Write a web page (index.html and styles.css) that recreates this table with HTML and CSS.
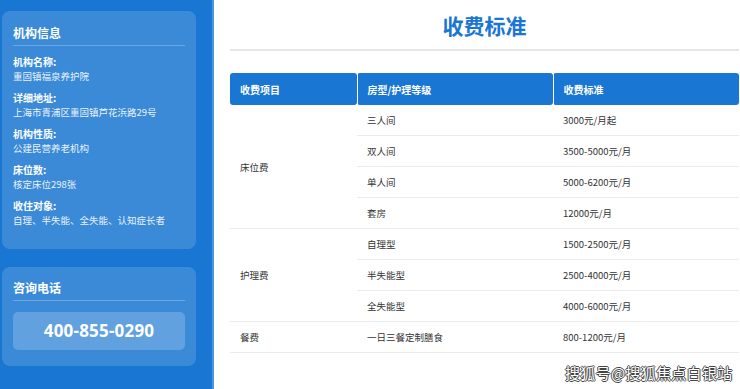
FILE: index.html
```html
<!DOCTYPE html>
<html lang="zh-CN">
<head>
    <meta charset="UTF-8">
    <meta name="viewport" content="width=device-width, initial-scale=1.0">
    <title>收费标准</title>
    <link rel="stylesheet" href="styles.css">
</head>
<body>
    <div class="page">
        <aside class="sidebar">
            <div class="card">
                <h3 class="card-title">机构信息</h3>
                <div class="info-item">
                    <p class="info-label">机构名称:</p>
                    <p class="info-value">重固镇福泉养护院</p>
                </div>
                <div class="info-item">
                    <p class="info-label">详细地址:</p>
                    <p class="info-value">上海市青浦区重固镇芦花浜路29号</p>
                </div>
                <div class="info-item">
                    <p class="info-label">机构性质:</p>
                    <p class="info-value">公建民营养老机构</p>
                </div>
                <div class="info-item">
                    <p class="info-label">床位数:</p>
                    <p class="info-value">核定床位298张</p>
                </div>
                <div class="info-item">
                    <p class="info-label">收住对象:</p>
                    <p class="info-value">自理、半失能、全失能、认知症长者</p>
                </div>
            </div>
            <div class="card card-phone">
                <h3 class="card-title">咨询电话</h3>
                <div class="phone-box">400-855-0290</div>
            </div>
        </aside>

        <main class="content">
            <h1 class="page-title">收费标准</h1>
            <table class="fee-table">
                <colgroup>
                    <col class="col-item">
                    <col class="col-type">
                    <col class="col-price">
                </colgroup>
                <thead>
                    <tr>
                        <th>收费项目</th>
                        <th>房型/护理等级</th>
                        <th>收费标准</th>
                    </tr>
                </thead>
                <tbody>
                    <tr>
                        <td rowspan="4">床位费</td>
                        <td>三人间</td>
                        <td>3000元/月起</td>
                    </tr>
                    <tr>
                        <td>双人间</td>
                        <td>3500-5000元/月</td>
                    </tr>
                    <tr>
                        <td>单人间</td>
                        <td>5000-6200元/月</td>
                    </tr>
                    <tr>
                        <td>套房</td>
                        <td>12000元/月</td>
                    </tr>
                    <tr>
                        <td rowspan="3">护理费</td>
                        <td>自理型</td>
                        <td>1500-2500元/月</td>
                    </tr>
                    <tr>
                        <td>半失能型</td>
                        <td>2500-4000元/月</td>
                    </tr>
                    <tr>
                        <td>全失能型</td>
                        <td>4000-6000元/月</td>
                    </tr>
                    <tr>
                        <td>餐费</td>
                        <td>一日三餐定制膳食</td>
                        <td>800-1200元/月</td>
                    </tr>
                </tbody>
            </table>
        </main>
    </div>

    <div class="watermark">搜狐号@搜狐焦点白银站</div>
</body>
</html>
```

FILE: styles.css
```css
body {
    font-family: "Noto Sans CJK SC", "Noto Sans", sans-serif;
    background-color: #fff;
    margin: 0;
    padding: 0;
    color: #333;
}

.page {
    display: flex;
    height: 389px;
    overflow: hidden;
}

.sidebar {
    width: 214px;
    flex-shrink: 0;
    background-color: #1976d2;
    border-right: 2px solid #4a95e0;
    padding: 11px 16px 0 2px;
    box-sizing: border-box;
}

.card {
    background-color: rgba(255, 255, 255, 0.15);
    border-radius: 8px;
    padding: 13px 11px 14px 11px;
    height: 238px;
    box-sizing: border-box;
    color: #fff;
}

.card-phone {
    margin-top: 18px;
    height: 99px;
    padding-top: 12px;
}

.card-title {
    margin: 0 0 8px 0;
    padding-bottom: 4px;
    font-size: 12px;
    line-height: 17px;
    font-weight: bold;
    border-bottom: 1px solid rgba(255, 255, 255, 0.25);
}

.info-item {
    margin-bottom: 7px;
}

.info-label {
    margin: 0;
    font-size: 10px;
    line-height: 15px;
    font-weight: bold;
}

.info-value {
    margin: 0;
    font-size: 9.5px;
    line-height: 14px;
    color: rgba(255, 255, 255, 0.92);
}

.card-phone .card-title {
    margin-bottom: 11px;
}

.phone-box {
    background-color: rgba(255, 255, 255, 0.2);
    border-radius: 5px;
    height: 38px;
    line-height: 38px;
    text-align: center;
    font-family: "Open Sans", sans-serif;
    font-size: 17px;
    font-weight: bold;
    letter-spacing: 0.2px;
}

.content {
    flex: 1;
    padding: 0 1px 0 16px;
}

.page-title {
    margin: 0;
    padding: 9px 0 8px 0;
    font-size: 21px;
    line-height: 32px;
    font-weight: bold;
    color: #1976d2;
    text-align: center;
    border-bottom: 2px solid #e6e6e6;
}

.fee-table {
    width: 100%;
    margin-top: 22px;
    border-collapse: collapse;
    table-layout: fixed;
    font-size: 9.5px;
}

.col-item {
    width: 127px;
}

.col-type {
    width: 196px;
}

.fee-table th {
    background-color: #1976d2;
    color: #fff;
    font-size: 10px;
    font-weight: bold;
    text-align: left;
    height: 32px;
    padding: 0 10px;
    border-radius: 3px;
    border-left: 1px solid #fff;
}

.fee-table th:first-child {
    border-left: none;
}

.fee-table td {
    height: 30px;
    padding: 0 10px;
    border-bottom: 1px solid #ebebeb;
    color: #333;
}

.watermark {
    position: absolute;
    left: 565px;
    top: 363px;
    font-size: 15px;
    line-height: 20px;
    color: #fff;
    letter-spacing: 0.3px;
    text-shadow: 1px 0 0 #444, -1px 0 0 #444, 0 1px 0 #444, 0 -1px 0 #444;
}
```
